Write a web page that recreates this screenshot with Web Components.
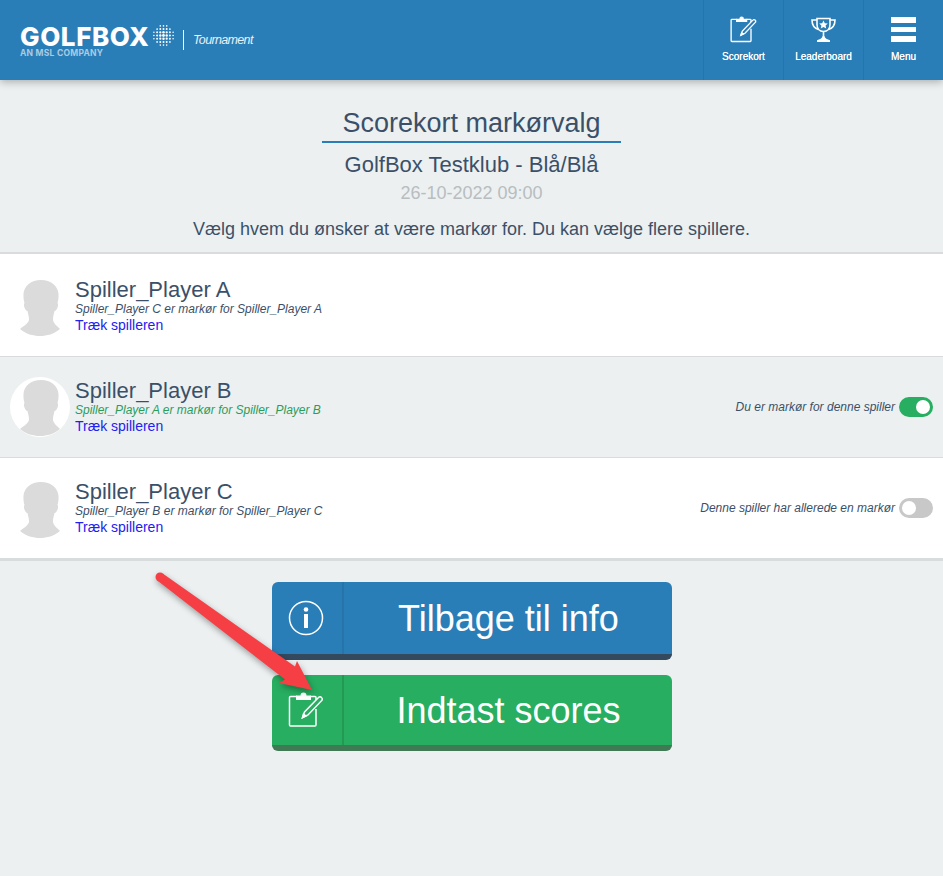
<!DOCTYPE html>
<html lang="da">
<head>
<meta charset="utf-8">
<title>Scorekort markørvalg</title>
<style>
  html, body { margin: 0; padding: 0; }
  body {
    position: relative;
    height: 876px;
    overflow: hidden;
    background: #ecf0f1;
    color: #34495e;
    font-family: "Liberation Sans", Arial, sans-serif;
  }
</style>
</head>
<body>
<app-header></app-header>
<page-intro></page-intro>
<player-list>
  <player-row name="Spiller_Player A" note="Spiller_Player C er markør for Spiller_Player A"></player-row>
  <player-row name="Spiller_Player B" note="Spiller_Player A er markør for Spiller_Player B" selected label="Du er markør for denne spiller" toggle="on"></player-row>
  <player-row name="Spiller_Player C" note="Spiller_Player B er markør for Spiller_Player C" label="Denne spiller har allerede en markør" toggle="off"></player-row>
</player-list>
<action-buttons></action-buttons>
<red-arrow></red-arrow>

<script>
const html = String.raw;

const clipboardIcon = (size, stroke) => html`
  <svg width="${size}" height="${size}" viewBox="0 0 36 36" fill="none" stroke="#fff" stroke-width="${stroke}" style="display:block">
    <path d="M9 4.5H2.5a1 1 0 0 0-1 1V33a1 1 0 0 0 1 1H27a1 1 0 0 0 1-1V17"/>
    <path d="M22 4.5h5a1 1 0 0 1 1 1V8"/>
    <path fill="#fff" stroke="none" d="M8 3.5h4.5a3 3 0 0 1 6 0H23V8H8z"/>
    <path d="M14.5 25.5l2-5.5L30.5 5.5a2 2 0 0 1 3 0 2 2 0 0 1 .2 3L20 23z"/>
    <path fill="#fff" stroke="none" d="M13.5 27l1.5-6 4.5 3z"/>
  </svg>`;

class AppHeader extends HTMLElement {
  connectedCallback() {
    // globe: grid of dots clipped to a circle, smaller toward the edge
    const dots = [];
    for (let y = -3; y <= 3; y++) {
      for (let x = -3; x <= 3; x++) {
        const d = Math.hypot(x, y);
        if (d < 3.4) dots.push(`<circle cx="${(10 + x * 3.05).toFixed(2)}" cy="${(10 + y * 3.05).toFixed(2)}" r="${(1.35 - d * .19).toFixed(2)}"/>`);
      }
    }
    this.attachShadow({ mode: "open" }).innerHTML = html`
      <style>
        :host {
          display: flex;
          justify-content: space-between;
          height: 80px;
          background: #2a7eb8;
          color: #fff;
          box-shadow: 0 2px 8px rgba(0, 0, 0, .28);
          position: relative;
        }
        .brand { display: flex; align-items: center; padding: 0 0 0 20px; }
        .logo { display: flex; flex-direction: column; width: 154px; }
        .word {
          display: flex;
          align-items: center;
          gap: 4px;
          margin-top: 1px;
          font: 800 26px/24px Inter, "Liberation Sans", sans-serif;
          letter-spacing: .6px;
        }
        .word svg { width: 21px; height: 21px; fill: #fff; flex: none; margin-top: -2px; }
        .sub {
          font: 700 8.5px/8px Inter, "Liberation Sans", sans-serif;
          letter-spacing: .25px;
          color: #a9cbe3;
        }
        .sep { width: 1px; height: 20px; background: #fff; margin: 0 9px 0 9px; }
        .kind { font: italic 12.5px "Liberation Sans", sans-serif; letter-spacing: -.65px; color: #e8f1f7; }
        nav { display: flex; }
        .tab {
          width: 80px;
          border-left: 1px solid #2674aa;
          display: flex;
          flex-direction: column;
          align-items: center;
          padding-top: 17px;
          box-sizing: border-box;
          font: 400 10px/12px "Liberation Sans", sans-serif;
          text-shadow: 0 0 .6px #fff;
        }
        .icon { height: 25px; margin-bottom: 9px; display: flex; align-items: center; justify-content: center; }
        .icon svg { display: block; }
        .bars { display: flex; flex-direction: column; gap: 4px; width: 25px; }
        .bars i { display: block; height: 5.67px; background: #fff; }
      </style>
      <div class="brand">
        <div class="logo">
          <div class="word">GOLFBOX<svg viewBox="0 0 20 20">${dots.join("")}</svg></div>
          <div class="sub">AN MSL COMPANY</div>
        </div>
        <div class="sep"></div>
        <div class="kind">Tournament</div>
      </div>
      <nav>
        <div class="tab">
          <div class="icon">${clipboardIcon(27, 1.8)}</div>
          Scorekort
        </div>
        <div class="tab">
          <div class="icon"><svg width="25" height="25" viewBox="0 0 25 25" fill="none" stroke="#fff" stroke-width="1.6">
            <path d="M6 1.5h13v6c0 4-2.5 7-6.5 7S6 11.5 6 7.5z"/>
            <path d="M6 3H1c0 5 1.5 8 6.5 9.5M19 3h5c0 5-1.5 8-6.5 9.5"/>
            <path d="M12.5 14v6"/>
            <path fill="#fff" stroke="none" d="M11.7 19h1.600c.5 2.2 3 3.5 5.7 4.3V25H6v-1.700c2.7-.8 5.2-2.1 5.7-4.3z"/>
            <path fill="#fff" stroke="none" d="M12.5 3.5l1.3 2.800 3 .3-2.200 2 .6 3-2.700-1.500-2.700 1.500.6-3-2.200-2 3-.3z"/>
          </svg></div>
          Leaderboard
        </div>
        <div class="tab">
          <div class="icon"><div class="bars"><i></i><i></i><i></i></div></div>
          Menu
        </div>
      </nav>
    `;
  }
}

class PageIntro extends HTMLElement {
  connectedCallback() {
    this.attachShadow({ mode: "open" }).innerHTML = html`
      <style>
        :host {
          display: flex;
          flex-direction: column;
          align-items: center;
          padding-top: 28px;
          height: 146px;
          box-sizing: border-box;
          color: #3b5068;
        }
        h1 {
          margin: 0;
          width: 299px;
          text-align: center;
          font: 400 27px/30px "Liberation Sans", sans-serif;
          padding-bottom: 3px;
          border-bottom: 2px solid #2a7eb8;
        }
        h2 { margin: 10px 0 0; font: 400 22px/24px "Liberation Sans", sans-serif; }
        .date { margin-top: 4px; font: 400 18px/24px "Liberation Sans", sans-serif; color: #b8bdc0; }
        p { margin: 12px 0 0; font: 400 18px/24px "Liberation Sans", sans-serif; }
      </style>
      <h1>Scorekort markørvalg</h1>
      <h2>GolfBox Testklub - Blå/Blå</h2>
      <div class="date">26-10-2022 09:00</div>
      <p>Vælg hvem du ønsker at være markør for. Du kan vælge flere spillere.</p>
    `;
  }
}

class PlayerList extends HTMLElement {
  connectedCallback() {
    this.attachShadow({ mode: "open" }).innerHTML = html`
      <style>
        :host {
          display: block;
          margin-top: 26px;
          border-top: 2px solid #d8dcdd;
          border-bottom: 3px solid #d8dcdd;
        }
      </style>
      <slot></slot>
    `;
  }
}

class PlayerRow extends HTMLElement {
  connectedCallback() {
    const selected = this.hasAttribute("selected");
    const label = this.getAttribute("label");
    const toggle = this.getAttribute("toggle");
    this.attachShadow({ mode: "open" }).innerHTML = html`
      <style>
        :host {
          display: flex;
          align-items: center;
          height: 101px;
          box-sizing: border-box;
          background: #fff;
          color: #3b5068;
          border-bottom: 1px solid #d8dcdd;
          padding: 0 10px;
        }
        :host(:first-child) { height: 103px; padding-top: 2px; }
        :host(:last-child) { border-bottom: 0; height: 100px; }
        :host([selected]) { background: #ecf0f1; }
        .avatar {
          width: 60px;
          height: 60px;
          border-radius: 50%;
          background: ${selected ? "#fff" : "transparent"};
          overflow: hidden;
          flex: none;
          margin: ${selected ? "0" : "2px"} 5px 0 0;
        }
        .avatar svg { display: block; }
        .info { flex: 1; display: flex; flex-direction: column; margin-top: -2px; }
        .name { font: 400 22px/25px "Liberation Sans", sans-serif; margin-bottom: 1px; }
        .note { font: italic 12px/13px "Liberation Sans", sans-serif; color: ${selected ? "#2a9d5c" : "#3b5068"}; }
        a { font: 400 14px/18px "Liberation Sans", sans-serif; color: #2222ee; text-decoration: none; }
        .state {
          display: flex;
          align-items: center;
          gap: 4px;
          font: italic 12px/20px "Liberation Sans", sans-serif;
        }
        .switch {
          width: 34px;
          height: 20px;
          border-radius: 10px;
          display: flex;
          align-items: center;
          padding: 0 3px;
          box-sizing: border-box;
          background: #c8c8c8;
        }
        .switch.on { background: #27ae60; justify-content: flex-end; }
        .switch i { width: 14px; height: 14px; border-radius: 50%; background: #fff; }
      </style>
      <div class="avatar">
        <svg width="60" height="60" viewBox="0 0 60 60" fill="#dbdbdb">
          <path d="M31 3C41 3 48 9 48.5 17C48.7 21 48.2 24 47.5 26C48.5 27 48.2 30 46.8 32C46 33.5 45.2 34 44.5 34C44 37 43 39 43 42C43 46 46 48 50 52C44 57 37 59 30 59C23 59 16 57 10 52C15 48 19 46 19 42C19 39 18 37 17.5 34C16.8 34 16 33.5 15.2 32C13.8 30 13.5 27 14.5 26C13.8 24 13.3 21 13.5 17C14 9 21 3 31 3Z"/>
        </svg>
      </div>
      <div class="info">
        <div class="name">${this.getAttribute("name")}</div>
        <div class="note">${this.getAttribute("note")}</div>
        <a href="#">Træk spilleren</a>
      </div>
      ${label ? html`<div class="state"><span>${label}</span><span class="switch ${toggle === "on" ? "on" : ""}"><i></i></span></div>` : ""}
    `;
  }
}

class ActionButton extends HTMLElement {
  connectedCallback() {
    this.attachShadow({ mode: "open" }).innerHTML = html`
      <style>
        :host {
          display: flex;
          width: 400px;
          height: 78px;
          box-sizing: border-box;
          border-radius: 6px;
          background: var(--bg);
          border-bottom: 6px solid var(--edge);
          color: #fff;
          font: 400 36px "Liberation Sans", sans-serif;
        }
        .icon {
          width: 72px;
          flex: none;
          display: flex;
          align-items: center;
          justify-content: center;
          padding-right: 2px;
          border-right: 2px solid var(--line);
          box-sizing: border-box;
        }
        .text { flex: 1; display: flex; align-items: center; justify-content: center; padding: 2px 0 0 2px; }
      </style>
      <div class="icon"><slot name="icon"></slot></div>
      <div class="text"><slot></slot></div>
    `;
  }
}

class ActionButtons extends HTMLElement {
  connectedCallback() {
    this.attachShadow({ mode: "open" }).innerHTML = html`
      <style>
        :host {
          display: flex;
          flex-direction: column;
          align-items: center;
          gap: 15px;
          padding-top: 21px;
        }
        .info { --bg: #2a7eb8; --edge: #34495e; --line: #2674aa; }
        .go { --bg: #27ae60; --edge: #3f7a55; --line: #229a54; height: 76px; }
      </style>
      <action-button class="info">
        <svg slot="icon" width="36" height="36" viewBox="0 0 36 36" fill="none" style="display:block">
          <circle cx="18" cy="18" r="16.5" stroke="#fff" stroke-width="1.5"/>
          <rect x="16" y="14" width="4" height="14" fill="#fff"/>
          <circle cx="18" cy="9.5" r="2.3" fill="#fff"/>
        </svg>
        Tilbage til info
      </action-button>
      <action-button class="go">
        <span slot="icon">${clipboardIcon(36, 1.5)}</span>
        Indtast scores
      </action-button>
    `;
  }
}

// annotation drawn over the page, so it sits on a free canvas
class RedArrow extends HTMLElement {
  connectedCallback() {
    this.attachShadow({ mode: "open" }).innerHTML = html`
      <style>
        :host { position: absolute; left: 0; top: 0; pointer-events: none; }
        svg { display: block; overflow: visible; filter: drop-shadow(1px 3px 3px rgba(0, 0, 0, .35)); }
      </style>
      <svg width="943" height="876" viewBox="0 0 943 876" fill="#f63f45">
        <circle cx="160" cy="577" r="4.5"/>
        <path d="M162.7 573.4L295 666.5 297 661 312 690 279 683 285 679.5 157.3 580.6z"/>
      </svg>
    `;
  }
}

customElements.define("app-header", AppHeader);
customElements.define("page-intro", PageIntro);
customElements.define("player-list", PlayerList);
customElements.define("player-row", PlayerRow);
customElements.define("action-button", ActionButton);
customElements.define("action-buttons", ActionButtons);
customElements.define("red-arrow", RedArrow);
</script>
</body>
</html>
